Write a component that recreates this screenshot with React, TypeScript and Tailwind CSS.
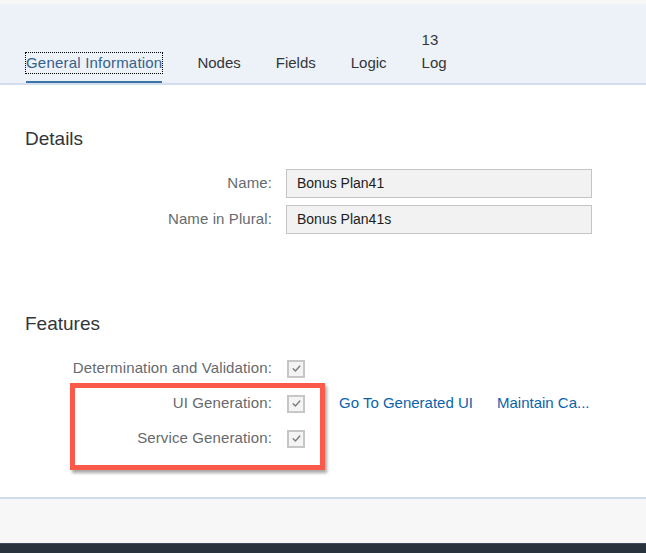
import React from "react";

const font = { fontFamily: '"Liberation Sans", Arial, sans-serif' };

function Check() {
  return (
    <span className="flex h-[18px] w-[18px] items-center justify-center border-2 border-[#c6c6c6] bg-[#f4f4f4]">
      <svg width="11" height="11" viewBox="0 0 11 11">
        <path d="M2.2 5.8 L4.4 8 L8.8 3" fill="none" stroke="#7d7d7d" strokeWidth="1.4" strokeLinecap="round" strokeLinejoin="round" />
      </svg>
    </span>
  );
}

export default function App() {
  const tabs = ["Nodes", "Fields", "Logic"];
  return (
    <div style={font} className="flex h-[553px] w-[646px] flex-col overflow-hidden bg-white text-[15px] text-[#32363a]">
      <div className="h-[4px] bg-[#f7f7f7]" />
      <div className="flex h-[81px] items-end gap-[35px] border-b-2 border-[#d2ddee] bg-[#edf1f8] pl-[26px]">
        <div className="border-b-2 border-[#3d74a8] pb-[8px]">
          <span className="block leading-[20px] tracking-[0.2px] text-[#33628d] outline-1 outline-dotted outline-black">General Information</span>
        </div>
        {tabs.map((t) => (
          <div key={t} className="pb-[10px]">
            <span className="block leading-[20px]">{t}</span>
          </div>
        ))}
        <div className="flex flex-col pb-[10px]">
          <span className="mb-[3px] block leading-[20px]">13</span>
          <span className="block leading-[20px]">Log</span>
        </div>
      </div>

      <div className="relative flex-1 px-[25px]">
        <h2 className="mt-[42px] text-[19px] leading-[24px] text-[#32363a]">Details</h2>
        <div className="mt-[18px] flex flex-col gap-[7px]">
          {[
            ["Name:", "Bonus Plan41"],
            ["Name in Plural:", "Bonus Plan41s"],
          ].map(([l, v]) => (
            <div key={l} className="flex items-center gap-[14px]">
              <span className="w-[247px] text-right tracking-[0.1px] text-[#666a6e]">{l}</span>
              <div className="flex h-[29px] w-[306px] items-center border border-[#c4c4c4] bg-[#f2f2f2] pl-[10px] text-[14px] text-[#1d1d1d]">
                {v}
              </div>
            </div>
          ))}
        </div>

        <h2 className="mt-[78px] text-[19px] leading-[24px] text-[#32363a]">Features</h2>
        <div className="mt-[15px] flex flex-col">
          {[
            ["Determination and Validation:", false],
            ["UI Generation:", true],
            ["Service Generation:", false],
          ].map(([l, links]) => (
            <div key={l as string} className="flex h-[35px] items-center">
              <span className="w-[247px] text-right tracking-[0.12px] text-[#666a6e]">{l as string}</span>
              <span className="ml-[15px]">
                <Check />
              </span>
              {links && (
                <div className="ml-[34px] flex gap-[24px] text-[#0b63ad]">
                  <span>Go To Generated UI</span>
                  <span>Maintain Ca...</span>
                </div>
              )}
            </div>
          ))}
        </div>

        <div className="pointer-events-none absolute left-[70px] top-[298px] h-[87px] w-[255px] border-[5px] border-[#fb5a4b] shadow-[2px_3px_3px_rgba(0,0,0,0.35)]" />
      </div>

      <div className="h-[46px] border-t-2 border-[#cfdcec] bg-[#f7f7f7]" />
      <div className="h-[10px] border-t border-[#3e4c5a] bg-[#29333e]" />
    </div>
  );
}
